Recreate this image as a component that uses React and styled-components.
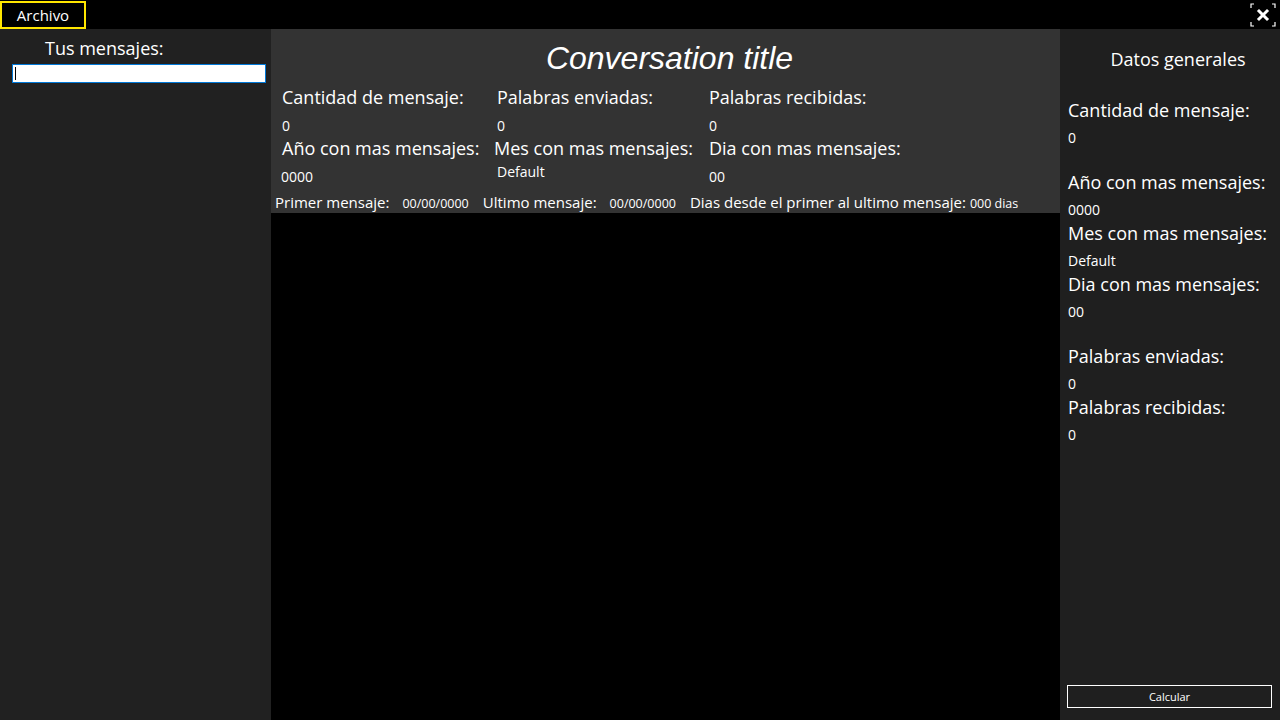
import styled, { createGlobalStyle } from "styled-components";

const GlobalStyle = createGlobalStyle`
  html, body {
    margin: 0;
    padding: 0;
    background: #000;
  }
  body {
    font-family: "Open Sans", "Noto Sans", sans-serif;
    color: #fff;
  }
`;

const Window = styled.div`
  width: 1280px;
  height: 720px;
  display: flex;
  flex-direction: column;
  overflow: hidden;
  background: #000;
`;

const TopBar = styled.div`
  height: 29px;
  display: flex;
  align-items: center;
  justify-content: space-between;
  background: #000;
`;

const MenuButton = styled.div`
  box-sizing: border-box;
  width: 86px;
  height: 28px;
  margin-top: 1px;
  border: 2px solid #ffe600;
  display: flex;
  align-items: center;
  justify-content: center;
  font-size: 15px;
  color: #fff;
`;

const CloseButton = styled.div`
  width: 26px;
  height: 24px;
  margin-right: 4px;
  display: flex;
  align-items: center;
  justify-content: center;
`;

const Main = styled.div`
  flex: 1;
  display: grid;
  grid-template-columns: 271px 789px 220px;
  min-height: 0;
`;

const LeftPanel = styled.div`
  background: #212121;
  padding: 7px 5px 0 12px;
  display: flex;
  flex-direction: column;
`;

const LeftTitle = styled.div`
  font-size: 18px;
  margin-left: 33px;
  line-height: 24px;
  margin-bottom: 4px;
`;

const SearchBox = styled.div`
  box-sizing: border-box;
  height: 19px;
  background: #fff;
  border: 1px solid #0078d7;
  display: flex;
  align-items: center;
  padding-left: 2px;
`;

const Caret = styled.span`
  width: 1px;
  height: 13px;
  background: #000;
`;

const Center = styled.div`
  display: flex;
  flex-direction: column;
  background: #000;
`;

const Header = styled.div`
  background: #333;
  height: 184px;
  box-sizing: border-box;
  display: flex;
  flex-direction: column;
`;

const Title = styled.h1`
  margin: 0;
  height: 56px;
  display: flex;
  align-items: center;
  justify-content: center;
  font-family: "Liberation Sans", Arial, sans-serif;
  font-style: italic;
  font-weight: normal;
  font-size: 32px;
  padding-left: 8px;
  padding-top: 2px;
  box-sizing: border-box;
`;

const StatsGrid = styled.div`
  display: grid;
  grid-template-columns: 215px 212px 1fr;
  padding-left: 11px;
`;

const Stat = styled.div`
  display: flex;
  flex-direction: column;
  height: 51px;
  margin-left: ${(p) => p.$shift || 0}px;
`;

const Label = styled.div`
  font-size: 18px;
  line-height: 24px;
  white-space: nowrap;
`;

const Value = styled.div`
  font-size: 14px;
  line-height: 18px;
  margin-top: ${(p) => p.$top ?? 8}px;
  margin-left: ${(p) => p.$shift || 0}px;
`;

const DatesRow = styled.div`
  display: flex;
  align-items: baseline;
  padding-left: 4px;
  margin-top: auto;
  height: 21px;
`;

const DateLabel = styled.span`
  font-size: 15px;
  white-space: nowrap;
`;

const DateValue = styled.span`
  font-size: 12.5px;
  white-space: nowrap;
  margin-left: ${(p) => p.$gap}px;
  margin-right: ${(p) => p.$after || 0}px;
`;

const Conversation = styled.div`
  flex: 1;
  background: #000;
`;

const RightPanel = styled.div`
  background: #1f1f1f;
  padding: 0 8px 12px 7px;
  display: flex;
  flex-direction: column;
`;

const RightTitle = styled.div`
  font-size: 18px;
  text-align: center;
  height: 60px;
  line-height: 60px;
  padding-left: 17px;
  margin-bottom: 9px;
`;

const RightStat = styled.div`
  display: flex;
  flex-direction: column;
  margin-bottom: ${(p) => p.$space || 0}px;
  padding-left: 1px;
`;

const RightValue = styled.div`
  font-size: 14px;
  line-height: 18px;
  margin-top: 7px;
  margin-bottom: 2px;
`;

const CalcButton = styled.button`
  margin-top: auto;
  box-sizing: border-box;
  height: 23px;
  width: 205px;
  background: transparent;
  border: 1px solid #fff;
  color: #fff;
  font-family: "Open Sans", sans-serif;
  font-size: 11px;
  padding: 0;
`;

const CloseIcon = () => (
  <svg width="26" height="24" viewBox="0 0 26 24">
    <g stroke="#fff" strokeWidth="1.2" fill="none">
      <path d="M1 5V1h3M22 1h3v4M25 19v4h-3M4 23H1v-4" />
    </g>
    <path
      d="M9 8 17 16M17 8 9 16"
      stroke="#fff"
      strokeWidth="3"
      strokeLinecap="square"
    />
  </svg>
);

const headerStats = [
  { label: "Cantidad de mensaje:", value: "0" },
  { label: "Palabras enviadas:", value: "0" },
  { label: "Palabras recibidas:", value: "0" },
  { label: "Año con mas mensajes:", value: "0000", valueShift: -1, top: 8 },
  { label: "Mes con mas mensajes:", value: "Default", shift: -3, valueShift: 3, top: 3 },
  { label: "Dia con mas mensajes:", value: "00", top: 8 },
];

const rightStats = [
  { label: "Cantidad de mensaje:", value: "0", space: 21 },
  { label: "Año con mas mensajes:", value: "0000" },
  { label: "Mes con mas mensajes:", value: "Default" },
  { label: "Dia con mas mensajes:", value: "00", space: 21 },
  { label: "Palabras enviadas:", value: "0" },
  { label: "Palabras recibidas:", value: "0" },
];

const App = () => {
  return (
    <Window>
      <GlobalStyle />
      <TopBar>
        <MenuButton>Archivo</MenuButton>
        <CloseButton>
          <CloseIcon />
        </CloseButton>
      </TopBar>
      <Main>
        <LeftPanel>
          <LeftTitle>Tus mensajes:</LeftTitle>
          <SearchBox>
            <Caret />
          </SearchBox>
        </LeftPanel>
        <Center>
          <Header>
            <Title>Conversation title</Title>
            <StatsGrid>
              {headerStats.map((s) => (
                <Stat key={s.label} $shift={s.shift}>
                  <Label>{s.label}</Label>
                  <Value $top={s.top} $shift={s.valueShift}>
                    {s.value}
                  </Value>
                </Stat>
              ))}
            </StatsGrid>
            <DatesRow>
              <DateLabel>Primer mensaje:</DateLabel>
              <DateValue $gap={13} $after={14}>00/00/0000</DateValue>
              <DateLabel>Ultimo mensaje:</DateLabel>
              <DateValue $gap={13} $after={14}>00/00/0000</DateValue>
              <DateLabel>Dias desde el primer al ultimo mensaje:</DateLabel>
              <DateValue $gap={4}>000 dias</DateValue>
            </DatesRow>
          </Header>
          <Conversation />
        </Center>
        <RightPanel>
          <RightTitle>Datos generales</RightTitle>
          {rightStats.map((s) => (
            <RightStat key={s.label} $space={s.space}>
              <Label>{s.label}</Label>
              <RightValue>{s.value}</RightValue>
            </RightStat>
          ))}
          <CalcButton>Calcular</CalcButton>
        </RightPanel>
      </Main>
    </Window>
  );
};

export default App;
